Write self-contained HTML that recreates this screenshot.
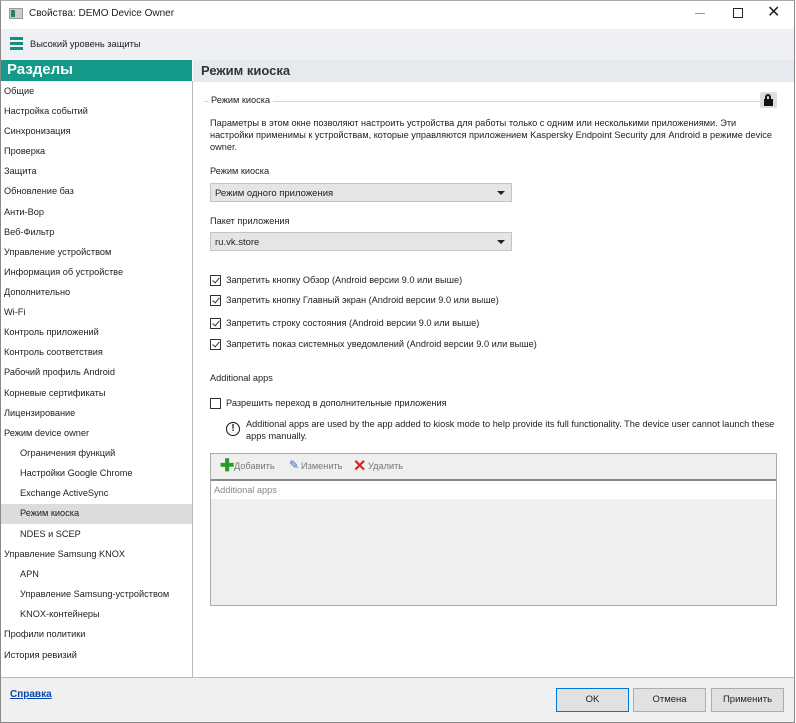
<!DOCTYPE html>
<html><head><meta charset="utf-8"><style>
*{box-sizing:border-box;margin:0;padding:0}
body{width:796px;height:723px;overflow:hidden;background:#fff;font-family:"Liberation Sans",sans-serif;font-size:9.2px;color:#222;position:relative}
.a{position:absolute;white-space:nowrap}
.win{position:absolute;left:0;top:0;width:795px;height:723px;border:1px solid #8a8a8a;border-top:1px solid #aaa}
.side div{position:absolute;left:4px;font-size:9.2px}
.side div.s{left:20px}
.cb{position:absolute;width:11px;height:11px;border:1px solid #333;background:#fff}
.cb.c::after{content:"";position:absolute;left:3px;top:0px;width:3px;height:6px;border:solid #333;border-width:0 1.5px 1.5px 0;transform:rotate(40deg)}
.dd{position:absolute;left:210px;width:302px;height:19px;background:#e5e5e5;border:1px solid #c4c4c4;padding:4px 4px;font-size:9.5px}
.dd::after{content:"";position:absolute;right:6px;top:7px;border:4px solid transparent;border-top:4px solid #222;border-bottom:0}
.btn{position:absolute;top:688px;height:24px;width:73px;background:#e1e1e1;border:1px solid #adadad;text-align:center;line-height:22px;font-size:9.5px}
</style></head><body>
<div class="win"></div>
<div class="a" style="left:9px;top:8px;width:14px;height:11px;background:#ccc;border:1px solid #999"><div style="position:absolute;left:1px;top:1px;width:4px;height:7px;background:#2c7d6e"></div></div>
<div class="a" style="left:29px;top:8px;font-size:10px">Свойства: DEMO Device Owner</div>
<div class="a" style="left:695px;top:13px;width:10px;border-top:1px solid #999"></div>
<div class="a" style="left:733px;top:8px;width:10px;height:10px;border:1px solid #222"></div>
<div class="a" style="left:767px;top:2px;font-size:16px;color:#222">✕</div>
<div class="a" style="left:1px;top:29px;width:793px;height:31px;background:#eef0f3"></div>
<div class="a" style="left:10px;top:37px;width:13px;height:3px;background:#13907f;box-shadow:0 5px 0 #13907f,0 10px 0 #13907f"></div>
<div class="a" style="left:30px;top:39px;font-size:9.3px">Высокий уровень защиты</div>
<div class="a" style="left:1px;top:60px;width:191px;height:21px;background:#139a89;color:#fff;font-weight:bold;font-size:15px;padding:1px 6px">Разделы</div>
<div class="a" style="left:193px;top:60px;width:601px;height:22px;background:#e6eaee;font-weight:bold;font-size:13px;padding:3px 8px;color:#333">Режим киоска</div>
<div class="a" style="left:192px;top:81px;width:1px;height:596px;background:#bbb"></div>
<div class="a" style="left:1px;top:504px;width:191px;height:20px;background:#dcdcdc"></div>
<div class="side">
<div style="top:86px">Общие</div>
<div style="top:106px">Настройка событий</div>
<div style="top:126px">Синхронизация</div>
<div style="top:146px">Проверка</div>
<div style="top:166px">Защита</div>
<div style="top:186px">Обновление баз</div>
<div style="top:207px">Анти-Вор</div>
<div style="top:227px">Веб-Фильтр</div>
<div style="top:247px">Управление устройством</div>
<div style="top:267px">Информация об устройстве</div>
<div style="top:287px">Дополнительно</div>
<div style="top:307px">Wi-Fi</div>
<div style="top:327px">Контроль приложений</div>
<div style="top:347px">Контроль соответствия</div>
<div style="top:367px">Рабочий профиль Android</div>
<div style="top:388px">Корневые сертификаты</div>
<div style="top:408px">Лицензирование</div>
<div style="top:428px">Режим device owner</div>
<div class="s" style="top:448px">Ограничения функций</div>
<div class="s" style="top:468px">Настройки Google Chrome</div>
<div class="s" style="top:488px">Exchange ActiveSync</div>
<div class="s" style="top:508px">Режим киоска</div>
<div class="s" style="top:529px">NDES и SCEP</div>
<div style="top:549px">Управление Samsung KNOX</div>
<div class="s" style="top:569px">APN</div>
<div class="s" style="top:589px">Управление Samsung-устройством</div>
<div class="s" style="top:609px">KNOX-контейнеры</div>
<div style="top:629px">Профили политики</div>
<div style="top:650px">История ревизий</div>
</div>
<div class="a" style="left:204px;top:101px;width:556px;border-top:1px solid #d5d5d5"></div>
<div class="a" style="left:208px;top:95px;background:#fff;padding:0 3px">Режим киоска</div>
<div class="a" style="left:760px;top:92px;width:17px;height:16px;background:#ddd;border-radius:2px"><div style="position:absolute;left:4px;top:7px;width:9px;height:7px;background:#111"></div><div style="position:absolute;left:5px;top:2px;width:6px;height:7px;border:2px solid #111;border-bottom:0;border-radius:3px 3px 0 0"></div></div>
<div class="a" style="left:210px;top:117px;line-height:12px;white-space:normal;width:565px">Параметры в этом окне позволяют настроить устройства для работы только с одним или несколькими приложениями. Эти настройки применимы к устройствам, которые управляются приложением Kaspersky Endpoint Security для Android в режиме device owner.</div>
<div class="a" style="left:210px;top:166px">Режим киоска</div>
<div class="dd" style="top:183px">Режим одного приложения</div>
<div class="a" style="left:210px;top:216px">Пакет приложения</div>
<div class="dd" style="top:232px">ru.vk.store</div>
<div class="cb c" style="left:210px;top:275px"></div><div class="a" style="left:226px;top:275px">Запретить кнопку Обзор (Android версии 9.0 или выше)</div>
<div class="cb c" style="left:210px;top:295px"></div><div class="a" style="left:226px;top:295px">Запретить кнопку Главный экран (Android версии 9.0 или выше)</div>
<div class="cb c" style="left:210px;top:318px"></div><div class="a" style="left:226px;top:318px">Запретить строку состояния (Android версии 9.0 или выше)</div>
<div class="cb c" style="left:210px;top:339px"></div><div class="a" style="left:226px;top:339px">Запретить показ системных уведомлений (Android версии 9.0 или выше)</div>
<div class="a" style="left:210px;top:373px">Additional apps</div>
<div class="cb" style="left:210px;top:398px"></div><div class="a" style="left:226px;top:398px">Разрешить переход в дополнительные приложения</div>
<div class="a" style="left:226px;top:422px;width:14px;height:14px;border:1.5px solid #111;border-radius:50%;font-weight:bold;font-size:10px;text-align:center;line-height:11px">!</div>
<div class="a" style="left:246px;top:418px;line-height:12px;white-space:normal;width:530px">Additional apps are used by the app added to kiosk mode to help provide its full functionality. The device user cannot launch these apps manually.</div>
<div class="a" style="left:210px;top:453px;width:567px;height:153px;border:1px solid #aaa;background:#efefef"></div>
<div class="a" style="left:211px;top:479px;width:565px;height:2px;background:#888"></div>
<div class="a" style="left:211px;top:481px;width:565px;height:18px;background:#fff;color:#888;padding:4px 3px">Additional apps</div>
<div class="a" style="left:220px;top:459px;color:#2a9a2a;font-size:17px;font-weight:bold;line-height:14px">✚</div>
<div class="a" style="left:234px;top:461px;color:#777">Добавить</div>
<div class="a" style="left:289px;top:458px;color:#3a6ab0;font-size:12px">✎</div>
<div class="a" style="left:301px;top:461px;color:#777">Изменить</div>
<div class="a" style="left:353px;top:456px;color:#d22;font-size:16px;font-weight:bold">✕</div>
<div class="a" style="left:368px;top:461px;color:#777">Удалить</div>
<div class="a" style="left:1px;top:677px;width:793px;height:45px;background:#f0f0f0;border-top:1px solid #bbb"></div>
<div class="a" style="left:10px;top:689px;color:#0645ad;font-weight:bold;text-decoration:underline;font-size:10px">Справка</div>
<div class="btn" style="left:556px;border:1.5px solid #0078d7">OK</div>
<div class="btn" style="left:633px">Отмена</div>
<div class="btn" style="left:711px">Применить</div>
</body></html>
